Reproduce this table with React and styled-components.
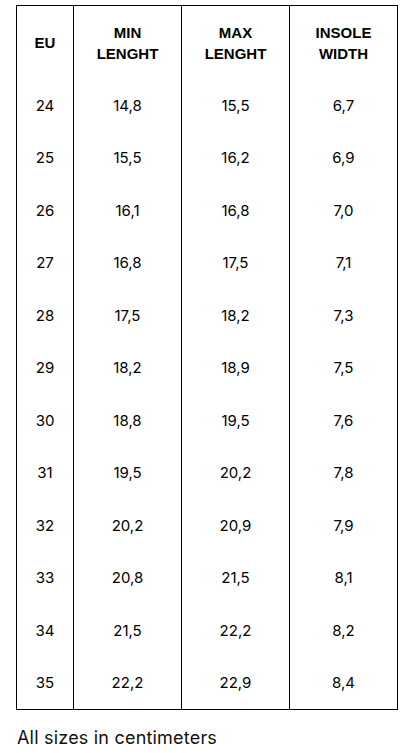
import React from 'react';
import styled, { createGlobalStyle } from 'styled-components';

const GlobalStyle = createGlobalStyle`
    html, body {
        margin: 0;
        padding: 0;
        background: #ffffff;
    }
    body {
        font-family: Inter, "Liberation Sans", Arial, sans-serif;
        color: #111111;
    }
`;

const Page = styled.div`
    padding: 5px 13px 0 16px;
    width: 410px;
    box-sizing: border-box;
`;

const Table = styled.table`
    width: 382px;
    border-collapse: collapse;
    border: 1px solid #000;
    table-layout: fixed;
`;

const Col = styled.col`
    width: ${props => props.w}px;
`;

const HeadCell = styled.th`
    height: 73px;
    padding: 0;
    border-left: 1px solid #000;
    font-family: "Liberation Sans", Arial, sans-serif;
    font-size: 15px;
    font-weight: 700;
    line-height: 21px;
    text-align: center;
    vertical-align: middle;
    color: #000;
`;

const Cell = styled.td`
    height: 52.5px;
    padding: 0;
    border-left: 1px solid #000;
    font-size: 15px;
    font-weight: 400;
    text-align: center;
    vertical-align: middle;
    color: #000;
`;

const Note = styled.p`
    margin: 17px 0 0 1px;
    font-size: 18px;
    letter-spacing: 0.2px;
    color: #111;
`;

const rows = [
    ['24', '14,8', '15,5', '6,7'],
    ['25', '15,5', '16,2', '6,9'],
    ['26', '16,1', '16,8', '7,0'],
    ['27', '16,8', '17,5', '7,1'],
    ['28', '17,5', '18,2', '7,3'],
    ['29', '18,2', '18,9', '7,5'],
    ['30', '18,8', '19,5', '7,6'],
    ['31', '19,5', '20,2', '7,8'],
    ['32', '20,2', '20,9', '7,9'],
    ['33', '20,8', '21,5', '8,1'],
    ['34', '21,5', '22,2', '8,2'],
    ['35', '22,2', '22,9', '8,4'],
];

const App = () => {
  return (
    <Page>
        <GlobalStyle />
        <Table>
            <colgroup>
                <Col w={57} />
                <Col w={108} />
                <Col w={108} />
                <Col w={108} />
            </colgroup>
            <thead>
                <tr>
                    <HeadCell>EU</HeadCell>
                    <HeadCell>MIN<br />LENGHT</HeadCell>
                    <HeadCell>MAX<br />LENGHT</HeadCell>
                    <HeadCell>INSOLE<br />WIDTH</HeadCell>
                </tr>
            </thead>
            <tbody>
                {rows.map(r => (
                    <tr key={r[0]}>
                        {r.map((v, i) => <Cell key={i}>{v}</Cell>)}
                    </tr>
                ))}
            </tbody>
        </Table>
        <Note>All sizes in centimeters</Note>
    </Page>
  )
}

export default App;
